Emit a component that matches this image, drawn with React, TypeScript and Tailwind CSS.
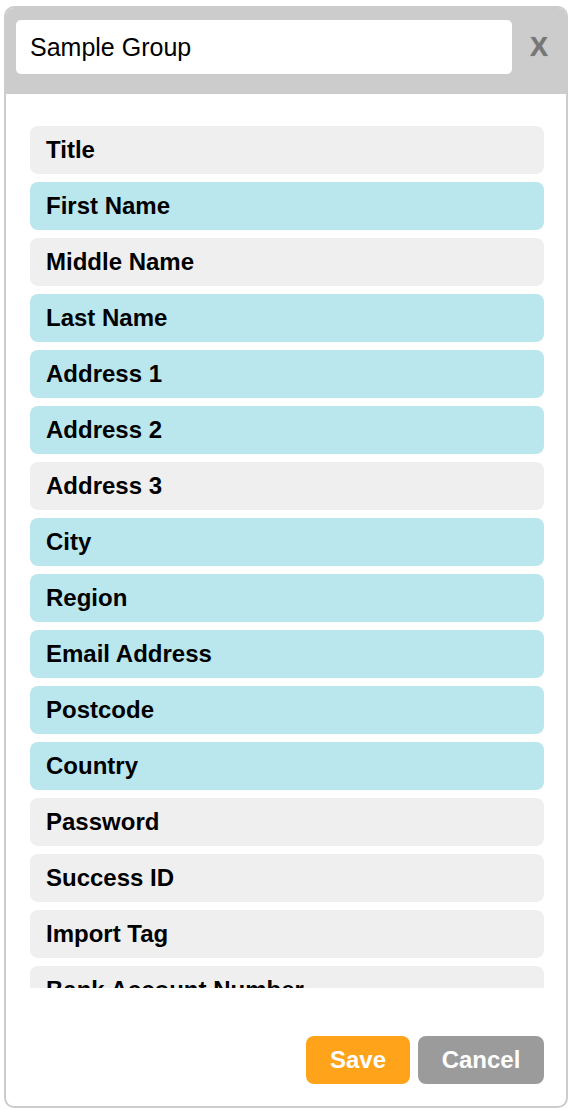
import { useState } from 'react';

interface Field { id: string; label: string; selected: boolean }

const fields: Field[] = [
  { id: 'title', label: 'Title', selected: false },
  { id: 'first_name', label: 'First Name', selected: true },
  { id: 'middle_name', label: 'Middle Name', selected: false },
  { id: 'last_name', label: 'Last Name', selected: true },
  { id: 'address1', label: 'Address 1', selected: true },
  { id: 'address2', label: 'Address 2', selected: true },
  { id: 'address3', label: 'Address 3', selected: false },
  { id: 'city', label: 'City', selected: true },
  { id: 'region', label: 'Region', selected: true },
  { id: 'email', label: 'Email Address', selected: true },
  { id: 'postcode', label: 'Postcode', selected: true },
  { id: 'country', label: 'Country', selected: true },
  { id: 'password', label: 'Password', selected: false },
  { id: 'success_id', label: 'Success ID', selected: false },
  { id: 'import_tag', label: 'Import Tag', selected: false },
  { id: 'bank_account', label: 'Bank Account Number', selected: false },
];

export default function App() {
  const [name, setName] = useState('Sample Group');
  const [items, setItems] = useState(fields);

  const toggle = (id: string) =>
    setItems(items.map(f => (f.id === id ? { ...f, selected: !f.selected } : f)));

  return (
    <div className="w-[572px] h-[1110px] bg-white pt-[6px] pl-[4px]" style={{ fontFamily: '"Liberation Sans", Arial, sans-serif' }}>
      <div className="w-[564px] h-[1102px] border-2 border-[#cccccc] rounded-[10px] overflow-hidden flex flex-col bg-white">
        <div className="bg-[#cccccc] h-[86px] shrink-0 flex items-start pl-[10px] pt-[12px]">
          <input
            value={name}
            onChange={e => setName(e.target.value)}
            className="w-[496px] h-[54px] rounded-[5px] bg-white px-[14px] text-[25px] text-black outline-none"
          />
          <button className="flex-1 h-[54px] flex items-center justify-center text-[27px] font-bold text-[#777777] [text-shadow:0_0_1px_#888]">
            X
          </button>
        </div>

        <div className="flex-1 flex flex-col pl-[24px] pr-[22px]">
          <div className="mt-[32px] h-[862px] overflow-hidden flex flex-col gap-[8px]">
            {items.map(f => (
              <div
                key={f.id}
                onClick={() => toggle(f.id)}
                className={`shrink-0 h-[48px] rounded-[8px] pl-[16px] flex items-center text-[24px] font-bold text-black cursor-pointer ${f.selected ? 'bg-[#bae6ee]' : 'bg-[#efefef]'}`}
              >
                {f.label}
              </div>
            ))}
          </div>

          <div className="flex justify-end gap-[8px] mt-[48px]">
            <button className="w-[104px] h-[48px] rounded-[8px] bg-[#ffa31a] text-white text-[24px] font-bold">Save</button>
            <button className="w-[126px] h-[48px] rounded-[8px] bg-[#9b9b9b] text-white text-[24px] font-bold">Cancel</button>
          </div>
        </div>
      </div>
    </div>
  );
}
